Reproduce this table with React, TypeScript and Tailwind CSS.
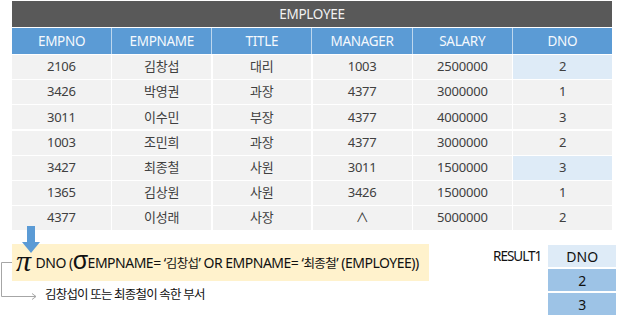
import React from "react";

const rows: { no: string; name: string; title: string; mgr: string; sal: string; dno: string; hl?: boolean }[] = [
  { no: "2106", name: "김창섭", title: "대리", mgr: "1003", sal: "2500000", dno: "2", hl: true },
  { no: "3426", name: "박영권", title: "과장", mgr: "4377", sal: "3000000", dno: "1" },
  { no: "3011", name: "이수민", title: "부장", mgr: "4377", sal: "4000000", dno: "3" },
  { no: "1003", name: "조민희", title: "과장", mgr: "4377", sal: "3000000", dno: "2" },
  { no: "3427", name: "최종철", title: "사원", mgr: "3011", sal: "1500000", dno: "3", hl: true },
  { no: "1365", name: "김상원", title: "사원", mgr: "3426", sal: "1500000", dno: "1" },
  { no: "4377", name: "이성래", title: "사장", mgr: "∧", sal: "5000000", dno: "2" },
];

const headers = ["EMPNO", "EMPNAME", "TITLE", "MANAGER", "SALARY", "DNO"];

const kr = (s: string) => <span className="text-[12.5px] tracking-[-0.6px]">{s}</span>;

export default function App() {
  return (
    <div
      className="relative w-[620px] h-[321px] bg-white overflow-hidden"
      style={{ fontFamily: '"Noto Sans", "Noto Sans CJK KR", sans-serif' }}
    >
      <div className="ml-[12px] pt-[1px] w-[600px] flex flex-col gap-[1px]">
        <div className="h-[26px] bg-[#595959] flex items-center justify-center text-[#f2f2f2] text-[13.5px] tracking-[-0.3px]">
          EMPLOYEE
        </div>
        <div className="h-[26px] grid grid-cols-6 gap-[1px] bg-[#bdd7ee]">
          {headers.map((h) => (
            <div key={h} className="bg-[#5b9bd5] flex items-center justify-center text-[#f5f9fd] text-[13.5px] tracking-[-0.3px]">
              {h}
            </div>
          ))}
        </div>
        <div className="flex flex-col gap-[1.2px]">
          {rows.map((r) => (
            <div key={r.no} className="h-[24px] grid grid-cols-6 gap-[1.5px] text-[13px] text-[#404040] tracking-[-0.2px]">
              {[r.no, r.name, r.title, r.mgr, r.sal].map((v, i) => (
                <div key={i} className="bg-[#f2f2f2] flex items-center justify-center">
                  {v}
                </div>
              ))}
              <div className={`${r.hl ? "bg-[#deebf7]" : "bg-[#f2f2f2]"} flex items-center justify-center`}>{r.dno}</div>
            </div>
          ))}
        </div>
      </div>

      {/* expression box */}
      <div className="ml-[12px] mt-[14px] w-[417px] h-[37px] bg-[#fff2cc] flex items-center pl-[4px] text-[14px] text-[#111] tracking-[-0.5px] whitespace-nowrap">
        <span className="text-[30px] italic leading-none mr-[5px] mt-[-4px]" style={{ fontFamily: '"Liberation Serif", serif' }}>π</span>
        <span>DNO (</span>
        <span className="text-[25px] leading-none mt-[-4px]" style={{ fontFamily: '"Liberation Sans", sans-serif' }}>σ</span>
        <span>EMPNAME= ‘{kr("김창섭")}’ OR EMPNAME= ‘{kr("최종철")}’ (EMPLOYEE))</span>
      </div>

      <div className="ml-[45px] mt-[8px] text-[12.5px] text-[#111] tracking-[-0.8px] leading-none">
        김창섭이 또는 최종철이 속한 부서
      </div>

      {/* arrow down */}
      <svg className="absolute left-[22px] top-[226px]" width="18" height="28" viewBox="0 0 18 28">
        <rect x="5" y="0" width="8" height="16" fill="#5b9bd5" />
        <polygon points="0,16 18,16 9,27" fill="#5b9bd5" />
      </svg>

      {/* bracket connector */}
      <svg className="absolute left-0 top-[259px]" width="40" height="42" viewBox="0 0 40 42">
        <polyline points="12,3.5 1.5,3.5 1.5,37.5 36,37.5" fill="none" stroke="#a6a6a6" strokeWidth="1" />
        <polyline points="32,34.5 36,37.5 32,40.5" fill="none" stroke="#a6a6a6" strokeWidth="1" />
      </svg>

      {/* result */}
      <div className="absolute left-[493px] top-[245px] flex">
        <div className="h-[22px] flex items-center text-[13.5px] text-[#111] tracking-[-1px] mr-[7px]">RESULT1</div>
        <div className="w-[68px] flex flex-col gap-[2px] text-[14px] text-[#111]">
          <div className="h-[22px] bg-[#deebf7] flex items-center justify-center">DNO</div>
          <div className="h-[22px] bg-[#9dc3e6] flex items-center justify-center">2</div>
          <div className="h-[22px] bg-[#9dc3e6] flex items-center justify-center">3</div>
        </div>
      </div>
    </div>
  );
}
